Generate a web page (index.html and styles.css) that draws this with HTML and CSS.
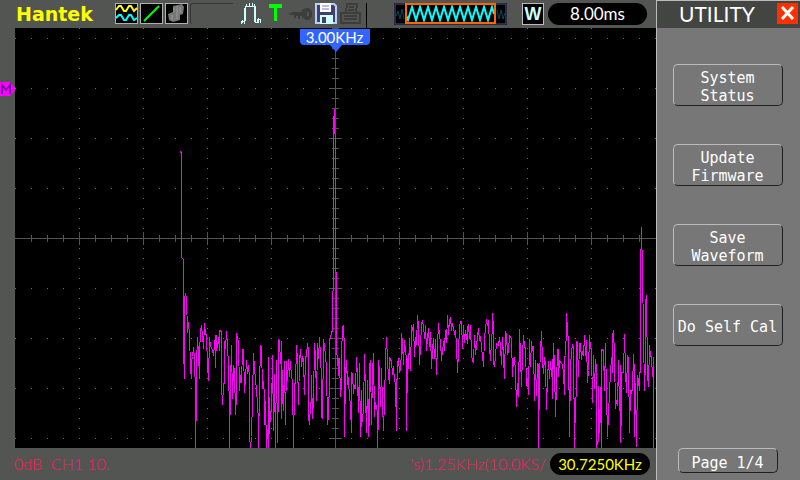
FILE: index.html
```html
<!DOCTYPE html>
<html lang="en">
<head>
  <meta charset="UTF-8">
  <meta name="viewport" content="width=device-width, initial-scale=1.0">
  <title>Hantek - Utility</title>
  <link rel="stylesheet" href="styles.css">
</head>
<body>
  <main class="scope">
    <header class="topbar">
      <h1 class="brand">Hantek</h1>

      <div class="icons">
        <svg class="icon" width="23" height="21" viewBox="0 0 23 21">
          <rect x="0" y="0" width="23" height="21" fill="#b0b0b0"/>
          <rect x="1" y="1" width="21" height="19" fill="#000"/>
          <path d="M1 7L4 3L6 3L9 8L11 8L14 3L16 3L19 8L22 5" fill="none" stroke="#ff0" stroke-width="2"/>
          <path d="M1 15L4 12L6 12L9 17L11 17L14 12L16 12L19 17L22 15" fill="none" stroke="#0ff" stroke-width="2"/>
        </svg>
        <svg class="icon" width="23" height="21" viewBox="0 0 23 21">
          <rect x="0" y="0" width="23" height="21" fill="#b0b0b0"/>
          <rect x="1" y="1" width="21" height="19" fill="#000"/>
          <path d="M4 18L19 3" stroke="#0f0" stroke-width="2"/>
        </svg>
        <svg class="icon" width="23" height="21" viewBox="0 0 23 21">
          <rect x="0" y="0" width="23" height="21" fill="#b0b0b0"/>
          <rect x="1" y="1" width="21" height="19" fill="#000"/>
          <path d="M8 3L17 1L19 4L18 11L15 12L15 17L8 19L4 17L3 11L8 9Z" fill="#777"/>
          <path d="M9 5V9M12 3V16M15 4V10M7 12V17" stroke="#999"/>
        </svg>
      </div>

      <div class="slot"></div>

      <svg class="pulse" width="22" height="22" viewBox="0 0 22 22" shape-rendering="crispEdges">
        <path d="M1 21V18H4V21M5 18V3H15V19H17V16H20V20M18 20V15M2 17V20M6 3V1M9 4V0M12 4V0M14 3V1" fill="none" stroke="#ceffff"/>
        <path d="M5 5V18M15 4V19" stroke="#ceffff" stroke-width="2"/>
      </svg>
      <svg class="trigger" width="13" height="17" viewBox="0 0 13 17">
        <path d="M0 0H13V4H8V17H5V4H0Z" fill="#0f0"/>
      </svg>

      <div class="status">
        <svg width="23" height="21" viewBox="0 0 23 21">
          <path d="M0 11L3 9H13V7L17 5H20L23 8V14L20 17H17L13 14V13H11V16H9V13H7V15H5V12H0ZM18 9V13H20V9Z" fill="#3c3e3c" fill-rule="evenodd"/>
        </svg>
        <svg width="22" height="21" viewBox="0 0 22 21">
          <path d="M1 1H19L21 3V20H1Z" fill="#42406b" stroke="#b5d0ff" stroke-width="2"/>
          <rect x="5" y="0" width="11" height="9" fill="#fff"/>
          <path d="M7 3H14M7 6H14" stroke="#7b79c6"/>
          <rect x="5" y="12" width="13" height="9" fill="#ceffff"/>
          <rect x="7" y="14" width="4" height="6" fill="#42406b"/>
        </svg>
        <svg width="22" height="22" viewBox="0 0 22 22" shape-rendering="crispEdges">
          <path d="M6 10L7 1H17L16 10M1 10H20V20H1ZM4 13H17M4 16H17M9 4H14M8 7H14" fill="none" stroke="#3c3e3c" stroke-width="2"/>
        </svg>
      </div>

      <svg class="memory" width="113" height="22" viewBox="0 0 113 22">
        <rect x="0" y="0" width="113" height="22" fill="#000"/>
        <rect x="1" y="1" width="111" height="20" fill="none" stroke="#525594"/>
        <path d="M2 13L4 8L6 16L8 6L10 16M103 7L105 16L107 7L109 16L111 10" fill="none" stroke="#084952"/>
        <path d="M12 12L14 17L18 4L22 17L26 4L30 17L34 4L38 17L42 4L46 17L50 4L54 17L58 4L62 17L66 4L70 17L74 4L78 17L82 4L86 17L90 4L94 17L98 4L100 11" fill="none" stroke="#0ff" stroke-width="2"/>
        <rect x="12" y="1" width="89" height="19" fill="none" stroke="#ff6500" stroke-width="2"/>
      </svg>

      <span class="window-mode">W</span>
      <output class="pill timebase">8.00ms</output>
    </header>

    <section class="display">
      <span class="marker">
        <svg width="16" height="14" viewBox="0 0 16 14">
          <path d="M0 0H10L16 7L10 14H0Z" fill="#f0f"/>
          <path d="M2 12V3L6 8L10 3V12" fill="none" stroke="#7b08a5" stroke-width="2"/>
        </svg>
      </span>
      <div class="plot">
        <svg class="graph" viewBox="15 28 641 421" preserveAspectRatio="none" shape-rendering="crispEdges">
          <defs>
            <pattern id="row-dots" x="15" y="38" width="16" height="50" patternUnits="userSpaceOnUse">
              <rect width="1" height="1" fill="#6b6d6b"/>
            </pattern>
            <pattern id="column-dots" x="15" y="28" width="64" height="10" patternUnits="userSpaceOnUse">
              <rect width="1" height="1" fill="#6b6d6b"/>
            </pattern>
            <pattern id="ticks-x" x="15" y="235" width="16" height="7" patternUnits="userSpaceOnUse">
              <rect width="1" height="7" fill="#525552"/>
            </pattern>
            <pattern id="ticks-x-major" x="15" y="232" width="64" height="13" patternUnits="userSpaceOnUse">
              <rect width="1" height="13" fill="#525552"/>
            </pattern>
            <pattern id="ticks-y" x="332" y="28" width="7" height="10" patternUnits="userSpaceOnUse">
              <rect width="7" height="1" fill="#525552"/>
            </pattern>
            <pattern id="ticks-y-major" x="329" y="38" width="13" height="50" patternUnits="userSpaceOnUse">
              <rect width="13" height="1" fill="#525552"/>
            </pattern>
          </defs>
          <!-- grid -->
          <rect x="15" y="28" width="641" height="420" fill="url(#row-dots)"/>
          <rect x="79" y="28" width="576" height="420" fill="url(#column-dots)"/>
          <!-- axes -->
          <rect x="15" y="238" width="641" height="1" fill="#525552"/>
          <rect x="335" y="28" width="1" height="420" fill="#525552"/>
          <rect x="16" y="235" width="639" height="7" fill="url(#ticks-x)"/>
          <rect x="16" y="232" width="639" height="13" fill="url(#ticks-x-major)"/>
          <rect x="332" y="28" width="7" height="420" fill="url(#ticks-y)"/>
          <rect x="329" y="28" width="13" height="420" fill="url(#ticks-y-major)"/>
          <rect x="15" y="448" width="641" height="1" fill="#525552"/>
          <!-- spectrum -->
          <polyline class="trace" transform="translate(.5 .5)" points="
            180,151 181,153 181,257 182,258 183,259 183,348 184,378 184,297 185,294 186,297 187,332 187,321 188,323
            189,333 190,368 191,378 191,361 192,356 193,347 194,357 195,396 195,447 196,396 196,363 197,337
            198,353 199,378 199,353 200,330 201,325 202,335 203,348 204,323 205,333 206,335 207,365 208,380
            209,337 210,345 212,350 213,355 215,335 215,367 216,335 217,347 218,337 219,350 219,330 221,331
            221,384 222,404 223,385 224,381 224,341 225,348 226,331 227,346 228,364 229,416 229,447 230,386
            231,345 232,398 233,365 234,370 235,414 236,395 236,333 238,341 239,390 240,375 241,382 242,349
            243,349 244,392 245,377 246,360 247,373 248,365 249,378 249,436 250,447 251,436 252,398 253,353
            254,368 255,378 256,390 257,402 258,422 258,447 259,387 260,345 261,347 262,388 263,381 264,395
            264,424 265,401 266,447 267,430 268,447 268,357 269,433 270,411 271,411 272,355 273,430 274,374
            275,447 276,360 277,442 278,385 278,339 279,340 280,363 281,363 281,418 281,341 282,396 283,410
            284,361 285,424 286,361 287,380 288,359 289,376 290,361 291,378 292,379 293,447 294,383 295,383
            296,345 297,360 298,404 299,360 300,349 301,366 302,357 303,359 304,394 305,357 306,355 307,343
            308,350 308,416 309,424 310,403 311,401 311,375 312,418 313,400 314,343 315,355 316,400 317,343
            318,358 319,337 320,355 321,380 321,416 322,418 323,341 323,339 324,346 325,355 326,367 327,424
            328,416 329,378 329,341 331,332 332,330 332,291 333,290 333,122 334,109 335,157 335,271 336,272
            336,352 337,356 338,375 338,358 339,358 340,396 341,384 341,355 342,327 343,325 344,350 344,436
            345,374 346,360 347,384 347,371 349,394 350,406 351,432 351,372 352,373 353,393 354,385 355,388
            356,357 357,378 358,412 359,363 360,436 361,390 361,426 362,418 363,410 364,354 365,392 366,432
            367,380 368,436 369,363 369,425 370,360 371,424 372,373 373,353 374,416 375,402 377,412 377,447
            378,412 378,360 379,370 380,406 381,368 382,403 383,430 384,401 385,359 386,337 387,360 388,376
            389,383 389,357 391,361 392,374 393,366 394,380 395,383 396,430 396,380 397,378 397,363 398,358
            399,372 400,368 401,351 401,333 402,342 403,364 404,340 405,350 406,359 406,430 407,358 408,368
            409,338 410,370 411,325 412,330 413,324 414,356 415,337 416,344 417,315 418,326 419,364 420,346
            421,323 422,321 423,325 424,338 425,325 426,350 427,338 428,328 429,346 430,332 431,368 432,350
            433,338 434,358 435,339 436,374 437,344 438,323 439,335 440,341 441,360 442,350 444,338 444,350
            445,330 446,342 447,315 448,334 449,320 450,317 451,330 452,323 453,328 454,333 455,331 456,344
            457,372 458,352 459,326 460,321 461,321 462,348 463,325 464,342 465,330 467,343 467,327 468,325
            469,338 470,325 471,354 472,360 473,362 474,335 475,354 476,345 477,336 478,328 479,340 480,336
            481,347 482,355 483,366 484,337 485,328 486,319 487,325 488,320 489,347 490,360 491,340 492,327
            492,313 493,327 493,362 494,366 495,355 496,343 498,345 499,337 500,346 501,364 502,337 503,356
            504,378 505,331 506,334 507,354 508,350 509,335 511,338 512,376 513,358 514,357 515,372 516,406
            517,383 518,396 519,329 520,356 521,386 522,354 523,335 524,346 525,348 526,385 527,378 528,394
            529,339 530,366 531,341 532,350 533,346 534,400 535,360 536,395 537,363 538,364 538,447 539,375
            540,350 541,331 542,362 543,373 544,357 545,364 546,409 547,376 548,361 549,378 550,361 551,376
            552,359 552,398 553,343 554,366 555,416 556,384 557,349 558,349 558,376 559,360 561,363 562,364
            563,373 564,394 564,357 565,355 566,327 566,313 567,330 568,340 569,436 570,368 571,350 572,345
            573,347 574,447 575,400 576,393 576,341 577,342 578,376 579,343 580,343 581,359 582,351 583,355
            584,335 585,355 586,340 587,382 588,370 589,335 590,348 591,348 592,402 593,355 594,388 595,359
            596,367 596,447 597,442 598,440 598,386 599,432 600,387 600,398 601,447 601,349 603,350 604,390
            605,343 606,392 607,436 608,414 609,392 610,372 611,357 612,372 612,335 613,330 614,355 615,408
            616,400 617,405 618,360 619,410 620,365 620,442 621,410 621,372 623,372 624,334 625,370 626,392
            627,355 628,358 629,432 630,390 631,392 632,388 633,354 634,373 634,436 635,383 636,446 637,375
            638,380 639,390 640,355 640,271 641,227 642,271 643,335 644,390 645,360 645,303 646,295 647,375
            648,386 649,345 650,355 651,357 652,376 653,357 653,447"/>
        </svg>
        <div class="flag">3.00KHz</div>
      </div>
    </section>

    <footer class="bottombar">
      <span class="reading">0dB &nbsp;CH1 10.</span>
      <span class="reading rate">'s)1.25KHz(10.0KS/</span>
      <output class="pill frequency">30.7250KHz</output>
    </footer>
  </main>

  <aside class="menu">
    <div class="menu-title">
      <h2>UTILITY</h2>
      <button class="close" aria-label="Close">
        <svg width="21" height="21" viewBox="0 0 21 21">
          <path d="M5 4L16 16M16 4L5 16" stroke="#fff" stroke-width="3"/>
        </svg>
      </button>
    </div>
    <nav class="menu-items">
      <button class="menu-button">System<br>Status</button>
      <button class="menu-button">Update<br>Firmware</button>
      <button class="menu-button">Save<br>Waveform</button>
      <button class="menu-button">Do Self Cal</button>
    </nav>
    <div class="menu-pages">
      <button class="menu-button page">Page 1/4</button>
    </div>
  </aside>
</body>
</html>
```

FILE: styles.css
```css
* {
  box-sizing: border-box;
}

body {
  margin: 0;
  min-height: 100vh;
  display: flex;
  background: #525552;
  color: white;
  font-family: Lato, "Liberation Sans", sans-serif;
  font-size: 16px;
}

svg {
  display: block;
}

h1, h2 {
  margin: 0;
}

button {
  color: white;
  padding: 0;
  cursor: pointer;
}

.scope {
  flex: 1;
  min-width: 0;
  display: flex;
  flex-direction: column;
}

/* top bar */
.topbar {
  height: 28px;
  padding: 3px 9px 3px 16px;
  display: flex;
  align-items: flex-start;
}

.brand {
  width: 99px;
  color: #ff0;
  font: bold 19px/22px "DejaVu Sans", sans-serif;
}

.icons {
  display: flex;
  gap: 2px;
}

.slot {
  width: 43px;
  height: 21px;
  margin: 0 7px 0 2px;
  border-top: 1px solid #393439;
  border-left: 1px solid #393439;
  border-radius: 3px 0 0 3px;
}

.trigger {
  margin: 1px 7px 0 7px;
}

.status {
  display: flex;
  gap: 3px;
  height: 25px;
  margin-right: 27px;
  padding-right: 4px;
  border-right: 1px solid #000;
}

.window-mode {
  width: 22px;
  height: 22px;
  margin: 0 4px 0 auto;
  border: 1px solid #bdbabd;
  background: #000;
  color: #ceffff;
  font: bold 18px/20px "Liberation Sans", sans-serif;
  text-align: center;
}

.pill {
  height: 22px;
  border-radius: 11px;
  background: #000;
  line-height: 22px;
  text-align: center;
}

.timebase {
  width: 99px;
  font-size: 17px;
}

/* graph area */
.display {
  flex: 1;
  display: flex;
  position: relative;
  padding-left: 15px;
}

.plot {
  flex: 1;
  position: relative;
  background: #000;
}

.graph {
  width: 100%;
  height: 100%;
}

.trace {
  fill: none;
  stroke: #f0f;
  stroke-width: 1;
}

.marker {
  position: absolute;
  left: 0;
  top: 54px;
}

.flag {
  position: absolute;
  top: 1px;
  left: 50%;
  width: 70px;
  height: 16px;
  margin-left: -36px;
  border-radius: 0 0 4px 4px;
  background: #3165ff;
  font-size: 15px;
  line-height: 16px;
  text-align: center;
}

.flag::after {
  content: "";
  position: absolute;
  top: 16px;
  left: 30px;
  border: 6px solid transparent;
  border-top: 7px solid #3165ff;
  border-bottom: 0;
}

/* bottom bar */
.bottombar {
  height: 31px;
  padding: 4px 6px 4px 14px;
  display: flex;
  line-height: 22px;
}

.reading {
  color: #ff1863;
  font-weight: 300;
}

.rate {
  margin: 0 4px 0 auto;
}

.frequency {
  width: 100px;
  color: #ff0;
  font-size: 15px;
}

/* side menu */
.menu {
  width: 144px;
  display: flex;
  flex-direction: column;
  border-top: 1px solid #bdbabd;
  border-left: 1px solid #bdbabd;
  background: #777;
}

.menu-title {
  height: 27px;
  padding: 2px 2px 4px 22px;
  display: flex;
  justify-content: space-between;
  align-items: center;
  background: #424542;
}

.menu-title h2 {
  font: 21px/21px Lato, sans-serif;
}

.close {
  width: 21px;
  height: 21px;
  border: 0;
  background: #ff3000;
}

.menu-items {
  flex: 1;
  display: flex;
  flex-direction: column;
  align-items: center;
  gap: 38px;
  padding: 36px 2px 38px 0;
}

.menu-pages {
  display: flex;
  justify-content: center;
  padding: 0 2px 7px 0;
}

.menu-button {
  width: 110px;
  height: 42px;
  padding-top: 4px;
  border: 1px solid;
  border-color: #bdbabd #212021 #212021 #bdbabd;
  border-radius: 5px;
  background: none;
  font: 15px/18px "DejaVu Sans Mono", monospace;
}

.page {
  width: 100px;
  height: 25px;
}
```
